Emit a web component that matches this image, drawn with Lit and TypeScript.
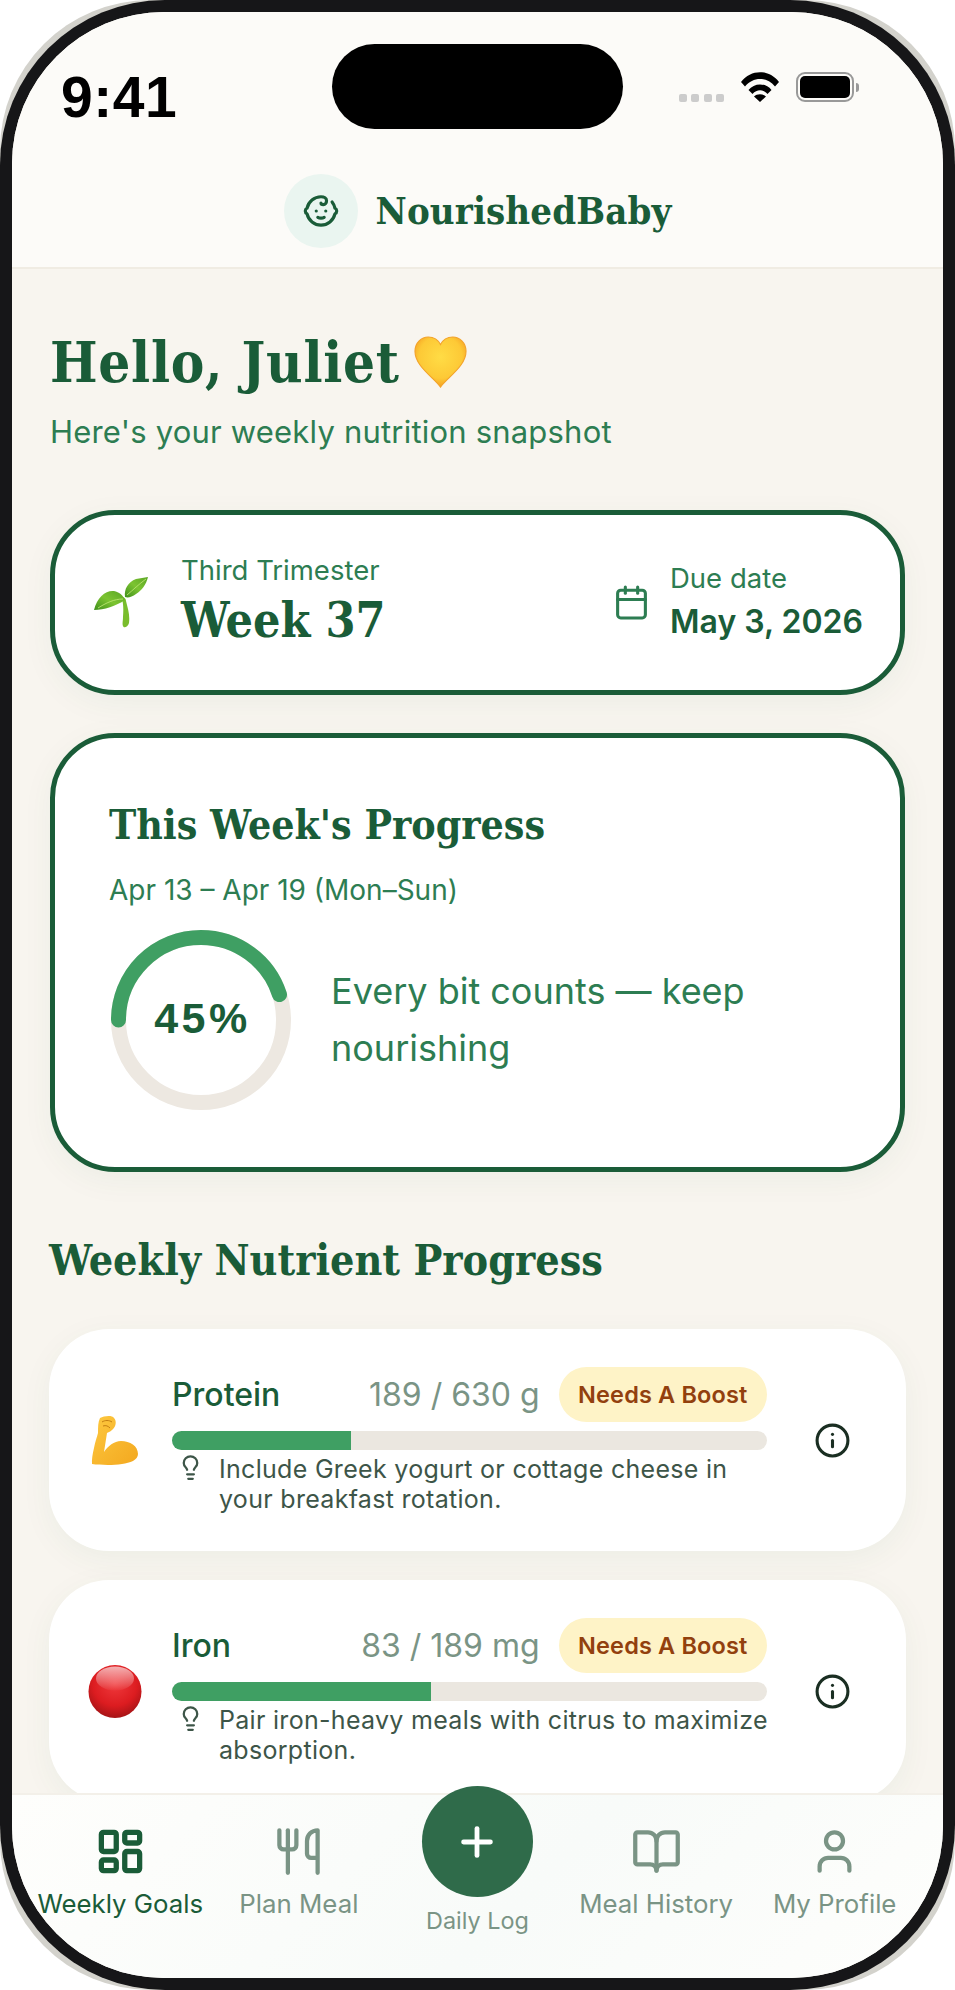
import { LitElement, html, css, svg } from "lit";
import { customElement } from "lit/decorators.js";

const icon = (size: number, sw: number, body: unknown) => html`<svg class="ic" width=${size} height=${size} viewBox="0 0 24 24" fill="none" stroke="currentColor" stroke-width=${sw} stroke-linecap="round" stroke-linejoin="round">${body}</svg>`;

const baby = svg`<path d="M9 12h.01"/><path d="M15 12h.01"/><path d="M10 16c.5.3 1.2.5 2 .5s1.5-.2 2-.5"/><path d="M19 6.3a9 9 0 0 1 1.8 3.9 2 2 0 0 1 0 3.6 9 9 0 0 1-17.6 0 2 2 0 0 1 0-3.6A9 9 0 0 1 12 3c2 0 3.5 1.1 3.5 2.5s-.9 2.5-2 2.5c-.8 0-1.5-.4-1.5-1"/>`;
const calendar = svg`<path d="M8 2v4"/><path d="M16 2v4"/><rect x="3" y="4" width="18" height="18" rx="2"/><path d="M3 10h18"/>`;
const bulb = svg`<path d="M15 14c.2-1 .7-1.7 1.5-2.5 1-.9 1.5-2.2 1.5-3.5A6 6 0 0 0 6 8c0 1 .2 2.2 1.5 3.5.7.7 1.3 1.5 1.5 2.5"/><path d="M9 18h6"/><path d="M10 22h4"/>`;
const info = svg`<circle cx="12" cy="12" r="10"/><path d="M12 16v-4"/><path d="M12 8h.01"/>`;
const grid = svg`<rect x="3" y="3" width="7" height="9" rx="1"/><rect x="14" y="3" width="7" height="5" rx="1"/><rect x="14" y="12" width="7" height="9" rx="1"/><rect x="3" y="16" width="7" height="5" rx="1"/>`;
const utensils = svg`<path d="M3 2v7c0 1.1.9 2 2 2h4a2 2 0 0 0 2-2V2"/><path d="M7 2v20"/><path d="M21 15V2a5 5 0 0 0-5 5v6c0 1.1.9 2 2 2h3Zm0 0v7"/>`;
const book = svg`<path d="M12 7v14"/><path d="M3 18a1 1 0 0 1-1-1V4a1 1 0 0 1 1-1h5a4 4 0 0 1 4 4 4 4 0 0 1 4-4h5a1 1 0 0 1 1 1v13a1 1 0 0 1-1 1h-6a3 3 0 0 0-3 3 3 3 0 0 0-3-3z"/>`;
const user = svg`<path d="M19 21v-2a4 4 0 0 0-4-4H9a4 4 0 0 0-4 4v2"/><circle cx="12" cy="7" r="4"/>`;
const plus = svg`<path d="M5 12h14"/><path d="M12 5v14"/>`;

const heartArt = html`<svg width="53" height="52" viewBox="0 0 56 55"><defs><radialGradient id="hg" cx=".5" cy=".4" r=".65"><stop offset="0" stop-color="#ffdc45"/><stop offset=".65" stop-color="#fdc936"/><stop offset="1" stop-color="#f4961c"/></radialGradient></defs><path d="M28 54C21 44 1 32 1 16 1 7 8 1 15 1c6 0 10.500 3 13 8 2.500-5 7-8 13-8 7 0 14 6 14 15 0 16-20 28-27 38Z" fill="url(#hg)" stroke="#f3a32b" stroke-width="1.2"/></svg>`;
const sproutArt = html`<svg width="54" height="51" viewBox="0 0 54 51"><defs><linearGradient id="lg" x1="0" y1="1" x2="1" y2="0"><stop offset="0" stop-color="#3f8f1c"/><stop offset=".5" stop-color="#7cc431"/><stop offset="1" stop-color="#5aa524"/></linearGradient></defs><path d="M29 20c2 1 3 2 3 4 2 8 4 14 3 22-.5 3-5 6-6 3-1-2 0-5 0-9 .5-7 .5-13-1-18Z" fill="#79bd2c"/><path d="M0 33C3 20 12 13 20 14 25 15 29 18 31 23 22 29 10 33 0 33Z" fill="url(#lg)"/><path d="M31 20C30 12 34 5 42 2L54 0C52 8 48 13 42 17 38 20 34 21 31 20Z" fill="url(#lg)"/><path d="M4 31C12 26 20 22 29 22M33 18C39 13 45 7 52 2" stroke="#b9e36f" stroke-width=".9" fill="none"/></svg>`;
const armArt = html`<svg width="46" height="49" viewBox="0 0 46 49" overflow="visible"><defs><linearGradient id="ag" x1="0" y1="0" x2="1" y2="1"><stop offset="0" stop-color="#fdc83f"/><stop offset="1" stop-color="#f3a81f"/></linearGradient></defs><path d="M8 2C12 0 20-1 22 2 25 5 24 11 20 14 18 16 16 16 15 17L12 36C16 30 22 25 29 25 38 25 46 30 46 38 46 44 38 47 30 48 20 49.500 8 49 0 48-.3 44 .5 38 2 32 3 26 5 21 6 17 6 11 6 6 8 2Z" fill="url(#ag)"/><path d="M10 6C13 4 17 4 20 6M11 10C14 9 16 10 18 12" stroke="#c47e12" stroke-width="1" fill="none"/></svg>`;
const redArt = html`<svg width="54" height="55" viewBox="0 0 54 54"><defs><radialGradient id="rg" cx=".5" cy=".35" r=".7"><stop offset="0" stop-color="#f0393c"/><stop offset=".6" stop-color="#dc1c20"/><stop offset="1" stop-color="#9a1214"/></radialGradient><linearGradient id="rs" x1="0" y1="0" x2="0" y2="1"><stop offset="0" stop-color="#fff" stop-opacity=".65"/><stop offset="1" stop-color="#fff" stop-opacity=".03"/></linearGradient></defs><circle cx="27" cy="27" r="26.500" fill="url(#rg)"/><ellipse cx="27" cy="14" rx="19" ry="12" fill="url(#rs)"/></svg>`;

const nutrients = [
  { art: armArt, name: "Protein", val: "189 / 630 g", pct: 30, tip: "Include Greek yogurt or cottage cheese in your breakfast rotation." },
  { art: redArt, name: "Iron", val: "83 / 189 mg", pct: 43.6, tip: "Pair iron-heavy meals with citrus to maximize absorption." },
];

const navItems = [
  { label: "Weekly Goals", ic: grid, sw: 2.5, active: true },
  { label: "Plan Meal", ic: utensils, sw: 2, active: false },
  { fab: true, label: "Daily Log", ic: plus, sw: 2.5, active: false },
  { label: "Meal History", ic: book, sw: 2, active: false },
  { label: "My Profile", ic: user, sw: 2, active: false },
];

@customElement("app-root")
export class AppRoot extends LitElement {
  static styles = css`
    :host { display: block; width: 955px; height: 1990px; background: #fff; font-family: Inter, "Liberation Sans", sans-serif; }
    .ic { display: block; flex: none; }
    .rim { width: 955px; height: 1990px; background: #d3d2cc; border-radius: 150px; }
    .bezel { width: 955px; height: 1990px; box-sizing: border-box; padding: 12px; background: #161618; border-radius: 165px; }
    .screen { position: relative; height: 100%; border-radius: 152px; overflow: hidden; display: flex; flex-direction: column; background: #f8f5ef; }
    .island { position: absolute; left: 320px; top: 32px; width: 291px; height: 85px; border-radius: 43px; background: #000; }
    .top { background: #fcfbf8; border-bottom: 2px solid #f0ece3; }
    .status { height: 162px; box-sizing: border-box; padding: 0 84px 0 49px; display: flex; align-items: flex-start; justify-content: space-between; }
    .time { font: 700 57px/64px "Liberation Sans", sans-serif; letter-spacing: .5px; color: #000; margin-top: 53px; }
    .sys { display: flex; align-items: flex-start; margin-top: 60px; }
    .dots { display: flex; gap: 4.5px; margin-top: 22px; margin-right: 17px; }
    .dots i { width: 8px; height: 8px; border-radius: 2px; background: #ccc; }
    .batt { margin-left: 17px; width: 58px; height: 30px; box-sizing: border-box; border: 2.5px solid #999; border-radius: 9px; padding: 2px; }
    .batt i { display: block; height: 100%; border-radius: 5px; background: #000; }
    .nub { width: 3px; height: 9px; margin: 11px 0 0 2px; background: #999; border-radius: 0 3px 3px 0; }
    .brand { display: flex; justify-content: center; align-items: center; gap: 18px; padding: 0 0 19px; }
    .logo { width: 74px; height: 74px; border-radius: 50%; background: #eaf5f0; color: #1a5c38; display: flex; align-items: center; justify-content: center; }
    .brand b { font: 700 38px/48px "DejaVu Serif Condensed", "DejaVu Serif", serif; color: #1a5c38; letter-spacing: .1px; }
    main { flex: 1; min-height: 0; overflow: hidden; padding: 0 38px; }
    h1 { margin: 60px 0 0; display: flex; align-items: center; gap: 14px; font: 700 56px/66px "DejaVu Serif Condensed", "DejaVu Serif", serif; color: #1a5c38; letter-spacing: .7px; }
    .sub { margin: 17px 0 0; font-size: 31px; letter-spacing: .2px; line-height: 40px; color: #2d7d52; }
    .card { background: #fff; border: 5px solid #1a5c38; box-shadow: 0 8px 32px rgba(26,92,56,.05); }
    .week { margin-top: 58px; height: 185px; box-sizing: border-box; border-radius: 65px; padding: 0 37px 0 39px; display: flex; align-items: center; justify-content: space-between; }
    .wl, .wr { display: flex; align-items: center; }
    .wl { gap: 33px; }
    .wr { gap: 20px; color: #2d7d52; }
    .lab { font-size: 27.5px; line-height: 34px; color: #2d7d52; }
    .wr .lab { line-height: 37px; }
    .wk { font: 700 48px/66px "DejaVu Serif Condensed", "DejaVu Serif", serif; color: #1a5c38; }
    .due { font-size: 32px; line-height: 49px; font-weight: 600; color: #1a5c38; }
    .prog { margin-top: 38px; height: 439px; box-sizing: border-box; border-radius: 65px; padding: 59px 54px 0; }
    h2 { margin: 0; font: 700 40.7px/56px "DejaVu Serif Condensed", "DejaVu Serif", serif; color: #1a5c38; }
    .range { margin: 20px 0 0; font-size: 28px; line-height: 34px; color: #2d7d52; }
    .pr { display: flex; align-items: center; gap: 40px; margin: 23px 0 0 2px; }
    .ring { position: relative; width: 180px; height: 180px; flex: none; }
    .ring span { position: absolute; inset: 0; padding: 0 0 3px 3px; display: flex; align-items: center; justify-content: center; font: 700 43px "Liberation Sans", sans-serif; color: #1a5c38; letter-spacing: 3.5px; }
    .msg { font-size: 36px; line-height: 57px; color: #2d7d52; }
    h2.sec { margin: 60px -1px 0; font-size: 42.7px; }
    .nut { margin: 41px -1px 0; background: #fff; border-radius: 60px; box-shadow: 0 8px 32px rgba(26,92,56,.05); height: 222px; box-sizing: border-box; display: flex; align-items: center; }
    .nut + .nut { margin-top: 29px; }
    .art { width: 123px; flex: none; display: flex; justify-content: center; padding-left: 8px; box-sizing: border-box; }
    .body { width: 595px; flex: none; }
    .head { display: flex; align-items: center; height: 56px; }
    .nm { font-size: 32px; font-weight: 500; color: #1a5c38; flex: 1; }
    .val { font-size: 32px; color: #7a9485; margin-right: 19px; }
    .badge { height: 55px; padding: 0 19.5px; display: flex; align-items: center; border-radius: 28px; background: #fef3c7; color: #92400e; font-size: 23.5px; letter-spacing: .15px; font-weight: 600; }
    .bar { margin-top: 9px; height: 19px; border-radius: 10px; background: #ebe7e0; overflow: hidden; }
    .bar i { display: block; height: 100%; background: #3f9f63; }
    .tip { display: flex; gap: 15.5px; margin: 4px -6px 0 4.5px; color: #3d5548; font-size: 25px; line-height: 30px; letter-spacing: .3px; }
    .inf { margin-left: 47px; color: #1a2e22; }
    nav { height: 185px; flex: none; box-sizing: border-box; padding: 0 19px; border-top: 2px solid #f3f0e9; background: linear-gradient(135deg, #fefefc, #f8fbf9 55%, #fefefc); display: flex; }
    .item { flex: 1 1 0; display: flex; flex-direction: column; align-items: center; color: #7a9485; padding-top: 31px; white-space: nowrap; min-width: 0; }
    .item.on { color: #1a5c38; }
    .item span { font-size: 25.8px; line-height: 32px; margin-top: 11px; }
    .item.fab span { font-size: 23.4px; margin-top: 8px; }
    .item.fab { padding-top: 0; margin-top: -9px; }
    .circle { width: 111px; height: 111px; border-radius: 50%; background: #2f6b4a; color: #fff; display: flex; align-items: center; justify-content: center; }
  `;

  render() {
    return html`<div class="rim"><div class="bezel"><div class="screen">
      <div class="island"></div>
      <div class="top">
        <div class="status">
          <div class="time">9:41</div>
          <div class="sys">
            <div class="dots"><i></i><i></i><i></i><i></i></div>
            <svg width="38" height="30" viewBox="0 0 38 30"><path d="M0 10C10 -3 28 -3 38 10L34 14.500C26 4.500 12 4.500 4 14.500Z M7.500 18C13 10.500 25 10.500 30.500 18L26.500 22C22 17 16 17 11.500 22Z M13 24.500C16 21.500 22 21.500 25 24.500L19 30Z" fill="#000"/></svg>
            <div class="batt"><i></i></div>
            <div class="nub"></div>
          </div>
        </div>
        <div class="brand"><div class="logo">${icon(38, 2, baby)}</div><b>NourishedBaby</b></div>
      </div>
      <main>
        <h1>Hello, Juliet ${heartArt}</h1>
        <p class="sub">Here's your weekly nutrition snapshot</p>
        <section class="card week">
          <div class="wl">${sproutArt}<div><div class="lab">Third Trimester</div><div class="wk">Week 37</div></div></div>
          <div class="wr">${icon(37, 2, calendar)}<div><div class="lab">Due date</div><div class="due">May 3, 2026</div></div></div>
        </section>
        <section class="card prog">
          <h2>This Week's Progress</h2>
          <p class="range">Apr 13 – Apr 19 (Mon–Sun)</p>
          <div class="pr">
            <div class="ring">
              <svg width="180" height="180" viewBox="0 0 180 180"><circle cx="90" cy="90" r="82.5" fill="none" stroke="#ede8e1" stroke-width="15"/><circle cx="90" cy="90" r="82.5" fill="none" stroke="#3f9f63" stroke-width="15" stroke-linecap="round" pathLength="100" stroke-dasharray="45 100" transform="rotate(180 90 90)"/></svg>
              <span>45%</span>
            </div>
            <div class="msg">Every bit counts — keep nourishing</div>
          </div>
        </section>
        <h2 class="sec">Weekly Nutrient Progress</h2>
        ${nutrients.map((n) => html`<section class="nut">
          <div class="art">${n.art}</div>
          <div class="body">
            <div class="head"><span class="nm">${n.name}</span><span class="val">${n.val}</span><span class="badge">Needs A Boost</span></div>
            <div class="bar"><i style="width:${n.pct}%"></i></div>
            <div class="tip">${icon(27, 2, bulb)}<span>${n.tip}</span></div>
          </div>
          <div class="inf">${icon(37, 2, info)}</div>
        </section>`)}
      </main>
      <nav>
        ${navItems.map((n) => n.fab
          ? html`<div class="item fab"><div class="circle">${icon(46, n.sw, n.ic)}</div><span>${n.label}</span></div>`
          : html`<div class="item ${n.active ? "on" : ""}">${icon(51, n.sw, n.ic)}<span>${n.label}</span></div>`)}
      </nav>
    </div></div></div>`;
  }
}
